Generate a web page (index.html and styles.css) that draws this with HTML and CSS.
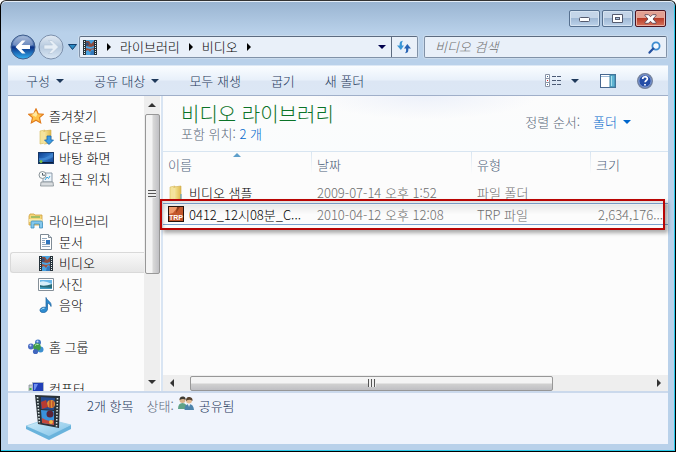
FILE: index.html
```html
<!DOCTYPE html>
<html lang="ko">
<head>
<meta charset="utf-8">
<meta name="viewport" content="width=device-width, initial-scale=1">
<title>비디오</title>
<link rel="stylesheet" href="styles.css">
</head>
<body>
<svg class="defs" aria-hidden="true">
  <defs>
    <linearGradient id="blue" x1="0" y1="0" x2="0" y2="1"><stop offset="0" stop-color="#8fa8cf"/><stop offset=".45" stop-color="#3a62a8"/><stop offset=".5" stop-color="#0a2f85"/><stop offset="1" stop-color="#35b4f4"/></linearGradient>
    <linearGradient id="pale" x1="0" y1="0" x2="0" y2="1"><stop offset="0" stop-color="#e3ebf4"/><stop offset=".5" stop-color="#b6c9de"/><stop offset="1" stop-color="#dbe8f5"/></linearGradient>
    <linearGradient id="gold" x1="0" y1="0" x2="1" y2="0"><stop offset="0" stop-color="#f7e9a0"/><stop offset="1" stop-color="#dfb94c"/></linearGradient>
    <linearGradient id="screen" x1="0" y1="0" x2="1" y2="1"><stop offset="0" stop-color="#0b3c8c"/><stop offset=".5" stop-color="#2f73c4"/><stop offset="1" stop-color="#123f8c"/></linearGradient>
    <linearGradient id="slab" x1="0" y1="0" x2="1" y2="1"><stop offset="0" stop-color="#d4effb"/><stop offset="1" stop-color="#7cc0e6"/></linearGradient>
    <symbol id="film" viewBox="0 0 16 16">
      <rect x="1" y="1" width="14" height="15" fill="#26323a"/>
      <rect x="4" y="1" width="8" height="15" fill="#4aa3e0"/>
      <path d="M4 2h3l2 3 3-3v5l-3 1-5-1z" fill="#8b4a3c"/><path d="M4 4l2-1 1 3-3 1z" fill="#2e4f7c"/>
      <path d="M4 9l4 1 4-1v2l-2-1-2 3-2-2-2 1z" fill="#a0523c"/><path d="M9 12l3-1v5H8z" fill="#3478ba"/>
      <path d="M2.500 2v14M13.500 2v14" stroke="#e8f2f0" stroke-width="1" stroke-dasharray="1 1"/>
    </symbol>
    <symbol id="folder" viewBox="0 0 16 16">
      <path d="M2 2l5-1v13l-5 1z" fill="#f4e39a" stroke="#d5b95d" stroke-width=".6"/><path d="M6 2l7-1v13l-7 1z" fill="url(#gold)" stroke="#cda94a" stroke-width=".6"/><path d="M6 3v12" stroke="#fff3bd"/>
    </symbol>
  </defs>
</svg>
<div class="window">
  <header class="titlebar">
    <button class="cap" aria-label="최소화"><svg width="12" height="6" viewBox="0 0 12 6"><rect x=".5" y="1.500" width="10" height="4" rx="1" fill="#fff" stroke="#555b6e"/></svg></button>
    <button class="cap" aria-label="최대화"><svg width="12" height="10" viewBox="0 0 12 10"><path d="M.5.5h10v8H.5z" fill="#fff" stroke="#555b6e"/><rect x="3.500" y="3.500" width="4" height="2" fill="#a9c0dc" stroke="#555b6e"/></svg></button>
    <button class="cap close" aria-label="닫기"><svg width="13" height="10" viewBox="0 0 13 10"><path d="M1 .7h3.500l2 2 2-2H12v1L9 5l3 3.300v1H8.500l-2-2-2 2H1v-1L4 5 1 1.700z" fill="#fff" stroke="#5d4757" stroke-width=".9"/></svg></button>
  </header>

  <div class="navrow">
    <div class="history">
      <button aria-label="뒤로"><svg width="26" height="26" viewBox="0 0 26 26"><circle cx="13" cy="13" r="12" fill="url(#blue)" stroke="#3e5d8c"/><path d="M3 11a10 9 0 0 1 20 0c-6 2-14 2-20 0z" fill="#fff" opacity=".25"/><path d="M5.500 13l6.500-6.500h3.500L11.500 11H20v4h-8.500l4 4.500H12z" fill="#fff"/></svg></button>
      <button aria-label="앞으로"><svg width="26" height="26" viewBox="0 0 26 26"><circle cx="13" cy="13" r="12" fill="url(#pale)" stroke="#7c90ac"/><path d="M20.500 13L14 6.500h-3.500l4 4.500H6v4h8.500l-4 4.500H14z" fill="#e6eef6" stroke="#b4c5d7" stroke-width=".6"/></svg></button>
      <button aria-label="최근 페이지"><svg width="9" height="6" viewBox="0 0 9 6"><path d="M.5.5h8l-4 5z" fill="#2b8bc4" stroke="#123e6d"/></svg></button>
    </div>
    <nav class="address" aria-label="주소">
      <svg class="i16" viewBox="0 0 16 16"><use href="#film"/></svg>
      <i class="right"></i><a href="#">라이브러리</a><i class="right"></i><a href="#">비디오</a><i class="right"></i>
      <button class="history-drop" aria-label="이전 위치"><i class="down"></i></button>
      <button class="refresh" aria-label="새로 고침"><svg width="16" height="14" viewBox="0 0 16 14"><path d="M7 .8C4 1 3.500 2.500 3.700 5.500H1L4.900 10 8 5.500H6C5.600 3.500 6 2 7 .8z" fill="#3a96d6"/><path d="M9 13.200c3-.2 3.500-1.700 3.300-4.700H15L11.300 4 8 8.500h2c.4 2 0 3.500-1 4.700z" fill="#2863b4"/></svg></button>
    </nav>
    <label class="search">
      <input type="search" placeholder="비디오 검색" aria-label="비디오 검색">
      <svg width="13" height="13" viewBox="0 0 13 13"><circle cx="8" cy="5" r="3.600" fill="#f4f9ff" stroke="#3c8cd0" stroke-width="1.800"/><path d="M5.300 7.600L1.500 11.600" stroke="#2450a0" stroke-width="2.200" stroke-linecap="round"/></svg>
    </label>
  </div>

  <div class="client">
    <div class="toolbar">
      <button>구성<i class="down"></i></button>
      <button>공유 대상<i class="down"></i></button>
      <button>모두 재생</button>
      <button>굽기</button>
      <button>새 폴더</button>
      <span class="tools">
        <button aria-label="보기 변경"><svg width="17" height="14" viewBox="0 0 17 14"><path d="M.5.5h4v4h-4zM.5 4.500h4v4h-4zM.5 8.500h4v4h-4z" fill="#fff" stroke="#8a93a5"/><path d="M2 2h1v1H2zM2 10h1v1H2z" fill="#3a6a9a"/><path d="M2 6h1v1H2z" fill="#d22"/><path d="M7 2.500h4m1 0h4M7 6.500h4m1 0h4M7 10.500h4m1 0h4" stroke="#4b5a74"/></svg><i class="down"></i></button>
        <button aria-label="미리 보기 창"><svg width="16" height="14" viewBox="0 0 16 14"><rect x=".5" y=".5" width="15" height="13" fill="#fff" stroke="#47678f"/><path d="M1 2.500h9" stroke="#9db9d7"/><rect x="10" y="1" width="5" height="12" fill="#5fb4d3" stroke="#3d83a6"/><path d="M11.500 2v10" stroke="#a6dfed"/></svg></button>
        <button aria-label="도움말"><svg width="16" height="16" viewBox="0 0 16 16"><circle cx="8" cy="8" r="7.400" fill="#254da6" stroke="#77849c" stroke-width="1.200"/><circle cx="8" cy="8" r="6.200" fill="none" stroke="#b2c3e5" stroke-width=".8"/><path d="M5.700 6c0-3 4.700-3 4.700-.2 0 1.700-2.300 1.700-2.300 3.500M8 11v1.600" fill="none" stroke="#fff" stroke-width="1.700"/></svg></button>
      </span>
    </div>

    <div class="body">
      <nav class="tree" aria-label="탐색">
        <ul>
          <li><a href="#"><svg class="i16" viewBox="0 0 16 16"><path d="M8 .8l2.200 4.900 5.200.5-3.900 3.500 1.200 5.200L8 12.200l-4.700 2.700 1.200-5.200L.6 6.200l5.200-.5z" fill="#ffc247" stroke="#e07a1c" stroke-width="1.100"/><path d="M8 3l1.300 3.500L8 9 4 7z" fill="#ffe9a0"/></svg>즐겨찾기</a></li>
          <li class="sub"><a href="#"><svg class="i16" viewBox="0 0 16 16"><use href="#folder"/><path d="M9 7h4v4h2.500L11 15.500 6.500 11H9z" fill="#3c9be4" stroke="#1768b0" stroke-width=".8"/></svg>다운로드</a></li>
          <li class="sub"><a href="#"><svg class="i16" viewBox="0 0 16 16"><rect x=".5" y="2.500" width="15" height="11" fill="url(#screen)" stroke="#173766"/><path d="M1 8c5 1 9-1 14-5v4c-5 3-9 4-14 3z" fill="#4c94dc" opacity=".6"/><path d="M1 12.500h14" stroke="#0a1d3d"/><circle cx="3" cy="11.500" r="1.500" fill="#7cc142"/></svg>바탕 화면</a></li>
          <li class="sub"><a href="#"><svg class="i16" viewBox="0 0 16 16"><path d="M5 2h9v9H5z" fill="#edf4fa" stroke="#8c9aa8"/><path d="M3 11h12l.5 4H2.500z" fill="#d9dde0" stroke="#878f96" stroke-width=".8"/><path d="M7 9l2-3 1.500 1.500L12 5" stroke="#36a4da" fill="none"/><circle cx="4.500" cy="4" r="3.500" fill="#f7f9f9" stroke="#8b9499"/><path d="M4.500 2v2.200H7" stroke="#52606b" fill="none"/></svg>최근 위치</a></li>
          <li class="gap"></li>
          <li><a href="#"><svg class="i16" viewBox="0 0 16 16"><path d="M1 3l1-2h4l1 1h7v10H1z" fill="#f3d679" stroke="#cf9f3b" stroke-width=".8"/><path d="M3 4h9" stroke="#6fae57" stroke-width="1.200"/><path d="M1 6h13v3H1z" fill="#fbeaa6"/><path d="M3 15V9q0-1 1-1h9q1.500 0 1.500 1.500V15h-3v-4H6v4z" fill="#84c8ec" stroke="#3d8fc0" stroke-width=".8"/></svg>라이브러리</a></li>
          <li class="sub"><a href="#"><svg class="i16" viewBox="0 0 16 16"><path d="M2.500.5h8l3 3v12h-11z" fill="#fff" stroke="#7f8b96"/><path d="M10.500.5v3h3" fill="#dce3ea" stroke="#7f8b96"/><path d="M4 4.500h5M4 6.500h3M4 8.500h3M4 10.500h8M4 12.500h8" stroke="#93a9be"/><path d="M8 6h4v4H8z" fill="#2f75bd"/></svg>문서</a></li>
          <li class="sub current"><a href="#" aria-current="page"><svg class="i16" viewBox="0 0 16 16"><use href="#film"/></svg>비디오</a></li>
          <li class="sub"><a href="#"><svg class="i16" viewBox="0 0 16 16"><path d="M.5 2.500h15v12H.5z" fill="#fff" stroke="#858f98"/><path d="M2 4h12v9H2z" fill="#68b7e8"/><path d="M2 6q4-2 12 2v3H2z" fill="#d6effb"/><path d="M2 9q4 2 12-1v5H2z" fill="#286c7a"/><path d="M2 11l12 1v1H2z" fill="#3f9bc0"/></svg>사진</a></li>
          <li class="sub"><a href="#"><svg class="i16" viewBox="0 0 16 16"><path d="M8 .5c1 3.500 6 4 5 9-.6-2-2-3-3.500-3.200V12c0 4-7 5-7.500 1.500C1.800 10.800 5.500 9.500 8 10.500z" fill="#2d8bd0" stroke="#175e9c" stroke-width=".7"/><path d="M3.500 12.500q1-1.500 3-1.200" stroke="#b3e3fa" fill="none"/></svg>음악</a></li>
          <li class="gap"></li>
          <li><a href="#"><svg class="i16" viewBox="0 0 16 16"><circle cx="10" cy="3.500" r="3" fill="#4478c4"/><circle cx="3" cy="7.500" r="3" fill="#4b6cc4"/><circle cx="12.500" cy="10.500" r="3" fill="#3c8fd0"/><circle cx="9" cy="8" r="3.800" fill="#3f9c48"/><circle cx="7.500" cy="12.500" r="2.600" fill="#4167be"/><path d="M7 6.500q1.500-2 3.500-1" stroke="#c6efbc" fill="none"/><circle cx="2.500" cy="6.500" r="1" fill="#c8dcf7"/><circle cx="9.500" cy="2.500" r="1" fill="#c8dcf7"/></svg>홈 그룹</a></li>
          <li class="gap"></li>
          <li><a href="#"><svg class="i16" viewBox="0 0 16 16"><path d="M1 4h4v10H1z" fill="#c4cbd0" stroke="#7a858c" stroke-width=".7"/><path d="M1.500 7h2v2h-2z" fill="#43b33d"/><path d="M4.500 1.500h11v9h-11z" fill="#2140b8" stroke="#aeb8c5"/><path d="M6 3h4l-3 6H6z" fill="#6f8ff0"/><path d="M7 13h7" stroke="#8b949c" stroke-width="2"/></svg>컴퓨터</a></li>
        </ul>
      </nav>
      <div class="vbar" aria-hidden="true"><i class="up"></i><span class="thumb"><i class="grip"></i></span><i class="dn"></i></div>

      <main>
        <section class="library">
          <div>
            <h1>비디오 라이브러리</h1>
            <p>포함 위치: <a href="#">2 개</a></p>
          </div>
          <div class="sort"><span>정렬 순서:</span><button>폴더<i class="down"></i></button></div>
        </section>
        <table>
          <colgroup><col class="c-name"><col class="c-date"><col class="c-type"><col></colgroup>
          <thead><tr><th>이름<svg class="asc" width="8" height="4" viewBox="0 0 8 4"><path d="M0 4l4-4 4 4z" fill="#5e9fca"/></svg></th><th>날짜</th><th>유형</th><th>크기</th></tr></thead>
          <tbody>
            <tr><td><span class="file"><svg class="i16" viewBox="0 0 16 16"><use href="#folder"/><path d="M13 9v5" stroke="#4f9dcb"/></svg>비디오 샘플</span></td><td>2009-07-14 오후 1:52</td><td>파일 폴더</td><td></td></tr>
            <tr class="picked"><td><span class="file"><svg class="i16" viewBox="0 0 16 16"><rect x=".5" y=".5" width="15" height="15" fill="#c3572c" stroke="#26120c"/><path d="M1 1h9L5 7 1 8z" fill="#ef9a6c"/><path d="M9 1h3L8 7z" fill="#8c3a1a"/><text x="8" y="13.500" text-anchor="middle" class="trp">TRP</text></svg>0412_12시08분_C...</span></td><td>2010-04-12 오후 12:08</td><td>TRP 파일</td><td class="size">2,634,176...</td></tr>
          </tbody>
        </table>
        <div class="mark"></div>
        <div class="hbar" aria-hidden="true"><i class="lf"></i><span class="thumb"><i class="grip"></i></span><i class="rt"></i></div>
      </main>
    </div>

    <footer>
      <svg class="big" width="46" height="46" viewBox="0 0 46 46">
        <path d="M0 32l21-7 24 6-22 12z" fill="url(#slab)" stroke="#a5d5ee"/><path d="M0 32l23 10v4L0 35zM45 31L23 42v4l22-11z" fill="#69b3dc"/>
        <path d="M9 1l25 1-1 32-21-4z" fill="#2a3238"/><path d="M15 3l14 1-1 12-13-1z" fill="#254b91"/><path d="M15 16l13 1v14l-12-2z" fill="#3a92dc"/>
        <circle cx="25" cy="10" r="4" fill="#e19236"/><path d="M15 8l5-2 2 7-6 2z" fill="#b73b32"/><path d="M24 6v8M27 7v6" stroke="#a02b2b"/>
        <circle cx="24" cy="20" r="3.500" fill="#5b2337"/><path d="M16 24l4 2 4 1 4-1v5l-12-2z" fill="#c4483c"/><circle cx="25" cy="28" r="2" fill="#f0b541"/>
        <path d="M11.500 3l2 27M31.500 4l-1 29" stroke="#d8e4e4" stroke-width="1.600" stroke-dasharray="1.500 1.500"/>
      </svg>
      <strong>2개 항목</strong>
      <span class="state">상태:</span>
      <svg class="i16" viewBox="0 0 16 16"><circle cx="4.500" cy="4" r="3" fill="#d9b38b"/><path d="M1.500 4q0-4 4-3.500 2.500.5 2 3.500-2-2-6 0z" fill="#3d3b34"/><path d="M0 13q0-6 4.500-6T9 13z" fill="#5fa287"/><circle cx="11" cy="4.500" r="3" fill="#e3bb91"/><path d="M8 5q0-4.500 3.500-4T14.500 5q-3-2.500-6.500 0z" fill="#56422f"/><path d="M6.500 14q0-6 4.500-6t5 6z" fill="#4c84ac"/><path d="M10 8l1 3 1-3z" fill="#fff"/></svg>
      <span>공유됨</span>
    </footer>
  </div>
</div>
</body>
</html>
```
FILE: styles.css
```css
* { box-sizing: border-box; }

body {
  margin: 0;
  font: 300 13px/20px "Noto Sans CJK KR", "Noto Sans", sans-serif;
  color: #000;
}

button, input { font: inherit; color: inherit; }
button { display: inline-flex; align-items: center; padding: 0; border: 0; background: none; white-space: nowrap; }
a { color: inherit; text-decoration: none; }
svg { display: block; flex: none; }
.defs { position: absolute; width: 0; height: 0; }
.i16 { width: 16px; height: 16px; }

.down, .right, .up, .dn, .lf, .rt { flex: none; width: 0; height: 0; border: 4px solid transparent; }
.down, .dn { border-top-color: currentColor; border-bottom: 0; }
.up { border-bottom-color: currentColor; border-top: 0; }
.right, .rt { border-left-color: currentColor; border-right: 0; }
.lf { border-right-color: currentColor; border-left: 0; }

.window {
  display: flex;
  flex-direction: column;
  height: 100vh;
  padding: 1px 7px 7px 7px;
  border: 1px solid #000;
  border-top-color: #333;
  border-radius: 6px 6px 0 0;
  background: linear-gradient(#99b4d1, #b9d1ea 32px, #b9d1ea);
  box-shadow: inset 0 1px #e4edf7, inset -1px -1px #29c8e8;
}

.titlebar { display: flex; justify-content: flex-end; gap: 2px; height: 32px; padding: 8px 2px 0 0; }
.cap {
  justify-content: center;
  width: 31px;
  height: 17px;
  border: 1px solid #56708f;
  border-radius: 2px;
  background: linear-gradient(#c4d5e8 45%, #a0b9d5 50%, #bdd3ea);
  box-shadow: inset 0 0 0 1px #d5e3f1;
}
.close { border-color: #4b1320; background: linear-gradient(#e2a092 45%, #b93c28 50%, #d5735c); box-shadow: inset 0 0 0 1px #e8b0a4; }

.navrow { display: flex; align-items: center; height: 31px; padding: 0 1px 5px 2px; }
.history { flex: none; display: flex; align-items: center; gap: 2px; width: 69px; }
.history button:last-child { margin-left: 2px; }
.address, .search {
  display: flex;
  align-items: center;
  height: 22px;
  border: 1px solid #8192a8;
  border-top-color: #5c6b80;
  border-radius: 2px;
  background: #e9f0f9;
  box-shadow: 0 0 0 1px #cadbed;
}
.address { flex: 1; gap: 9px; padding-left: 2px; }
.history-drop { margin-left: auto; margin-right: -4px; color: #00004c; }
.refresh { justify-content: center; width: 26px; height: 20px; border-left: 1px solid #5c6b80; }
.search { flex: 0 0 37%; min-width: 0; margin-left: 6px; padding: 0 5px 0 10px; }
.search input { flex: 1; min-width: 0; padding: 0; border: 0; outline: 0; background: none; font-style: italic; }
.search input::placeholder { color: #6d6d6d; opacity: 1; }

.client { flex: 1; display: flex; flex-direction: column; min-height: 0; background: #fcfcfc; }
.toolbar {
  display: flex;
  align-items: center;
  gap: 30px;
  height: 31px;
  padding: 0 15px 0 18px;
  border-top: 1px solid #dce8f5;
  border-bottom: 1px solid #a0afc9;
  background: linear-gradient(#fafdff, #e8f0fa 48%, #dce6f4 52%, #dce7f5);
  color: #1e395b;
}
.toolbar button { gap: 6px; }
.tools { display: flex; align-items: center; gap: 21px; margin-left: auto; }
.tools button:first-child { gap: 9px; }

.body { flex: 1; display: flex; min-height: 0; }
.tree { flex: none; width: 136px; overflow: hidden; }
.tree ul { margin: 0; padding: 9px 0 0 2px; list-style: none; }
.tree li { height: 21px; padding-left: 18px; }
.tree a { display: flex; align-items: center; gap: 5px; height: 21px; white-space: nowrap; }
.tree .sub { padding-left: 28px; }
.current { border: 1px solid #d9d9d9; border-right: 0; border-radius: 3px 0 0 3px; background: linear-gradient(#f9f9f9, #e6e6e6); }
.tree .current { padding-left: 27px; }
.current a { height: 19px; }

.vbar, .hbar { display: flex; align-items: center; background: #eee; color: #333; }
.vbar { flex: none; flex-direction: column; width: 16px; padding: 7px 0; }
.thumb { display: flex; align-items: center; justify-content: center; border: 1px solid #979797; border-radius: 2px; }
.vbar .thumb { width: 15px; height: 160px; margin-top: 7px; background: linear-gradient(90deg, #f4f4f4 45%, #d8d8d8 55%, #c0c0c4); }
.grip { width: 8px; height: 8px; background: repeating-linear-gradient(#555 0 1px, #eee 1px 3px); }
.dn { margin-top: auto; }

main { position: relative; flex: 1; display: flex; flex-direction: column; min-width: 0; margin-left: 1px; border-left: 2px solid #d9e5f3; }
.library {
  display: flex;
  justify-content: space-between;
  height: 55px;
  padding: 6px 37px 0 18px;
  background: radial-gradient(ellipse at 52% 0, #edf1fa, #fcfcfc00 30%), linear-gradient(#fcfcfc, #fafcfd);
  color: #5a6779;
}
h1 { margin: 0; font-size: 20px; font-weight: 300; line-height: 24px; color: #0b7328; }
.library p { margin: 0; line-height: 16px; }
.library a, .sort button { color: #06c; }
.sort { display: flex; align-items: center; gap: 13px; height: 40px; }
.sort button { gap: 6px; }

table { width: 100%; border-collapse: collapse; table-layout: fixed; color: #6d6d6d; }
.c-name { width: 149px; }
.c-date { width: 160px; }
.c-type { width: 119px; }
th, td { height: 21px; padding: 0 0 0 5px; line-height: 19px; text-align: left; white-space: nowrap; font-weight: 300; }
th { position: relative; height: 31px; padding-bottom: 5px; border-top: 1px solid #d8e5f1; color: #4c607a; background: linear-gradient(#d8e5f1, #fcfcfc) right top / 1px 22px no-repeat; }
th:last-child { background: none; }
.asc { position: absolute; top: 1px; left: 70px; }
.file { display: flex; align-items: center; gap: 5px; color: #000; }
.picked td { border-top: 1px solid #7da2ce; border-bottom: 1px solid #7da2ce; background: linear-gradient(#e8e8e8, #fcfcfc 50%); }
td.size { padding-right: 5px; text-align: right; }
.trp { font: 700 7px "Liberation Sans", sans-serif; fill: #fff; }
.mark { position: absolute; top: 103px; left: -3px; right: 3px; height: 31px; border: 2px solid #b90504; box-shadow: 3px 3px 4px #0005, inset 2px 2px 3px #0002; }

.hbar { height: 16px; margin-top: auto; padding: 0 7px; }
.hbar .thumb { flex: 0 0 74%; height: 15px; margin-left: 16px; background: linear-gradient(#f4f4f4 45%, #d0d0d0 55%, #bfbfc3); }
.hbar .grip { background: repeating-linear-gradient(90deg, #555 0 1px, #eee 1px 3px); }
.rt { margin-left: auto; }

footer {
  display: flex;
  align-items: flex-start;
  height: 53px;
  padding: 3px 18px 0;
  border-top: 2px solid #cbd9ec;
  background: #f0f4fc;
  color: #1e395b;
}
footer strong { margin: 0 13px 0 15px; font-weight: 300; }
.big { margin-top: -2px; }
.state { margin-right: 4px; color: #5a6779; }
footer span:last-child { margin-left: 5px; }
```
